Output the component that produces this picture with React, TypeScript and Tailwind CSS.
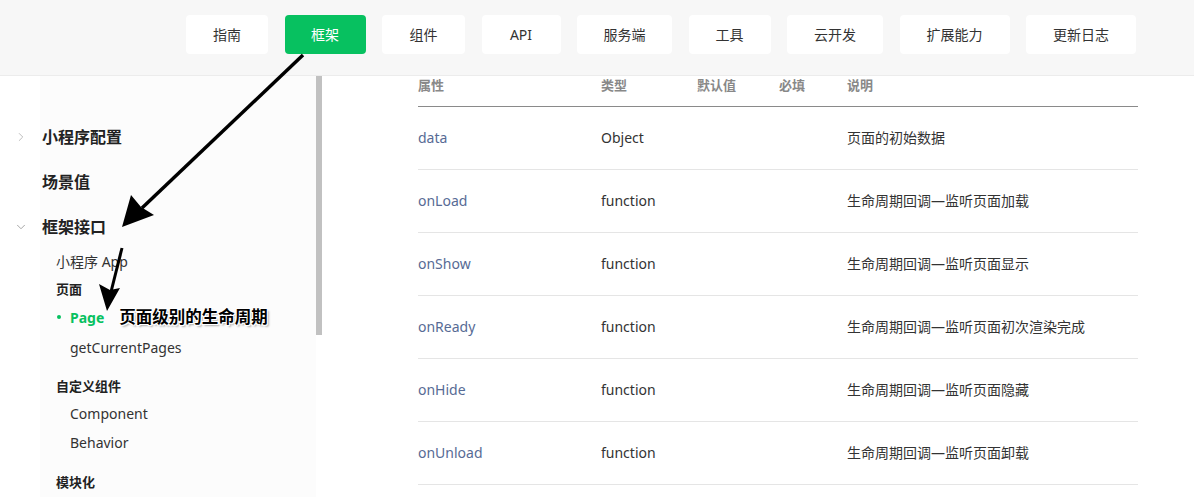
import React from 'react'
import { ChevronRight, ChevronDown } from 'lucide-react'

const navItems = [
	{ label: '指南', w: 'w-[82px]' },
	{ label: '框架', w: 'w-[81px]', active: true },
	{ label: '组件', w: 'w-[83px]' },
	{ label: 'API', w: 'w-[79px]' },
	{ label: '服务端', w: 'w-[95px]' },
	{ label: '工具', w: 'w-[82px]' },
	{ label: '云开发', w: 'w-[96px]' },
	{ label: '扩展能力', w: 'w-[110px]' },
	{ label: '更新日志', w: 'w-[110px]' },
]

const rows = [
	{ name: 'data', type: 'Object', desc: '页面的初始数据' },
	{ name: 'onLoad', type: 'function', desc: '生命周期回调—监听页面加载' },
	{ name: 'onShow', type: 'function', desc: '生命周期回调—监听页面显示' },
	{ name: 'onReady', type: 'function', desc: '生命周期回调—监听页面初次渲染完成' },
	{ name: 'onHide', type: 'function', desc: '生命周期回调—监听页面隐藏' },
	{ name: 'onUnload', type: 'function', desc: '生命周期回调—监听页面卸载' },
]

const cols = 'grid grid-cols-[183px_96px_82px_68px_291px]'

const App: React.FC = () => {
	return (
		<div className="relative w-[1194px] h-[497px] overflow-hidden bg-white text-[#333] font-['Noto_Sans','Noto_Sans_CJK_SC',sans-serif]">
			{/* Top nav */}
			<div className="h-[76px] bg-[#f7f7f7] border-b border-[#ececec] flex pl-[186px] pt-[15px] gap-[16.5px]">
				{navItems.map(item => (
					<div
						key={item.label}
						className={`${item.w} h-[39px] rounded flex items-center justify-center text-[14px] ${item.active ? 'bg-[#07c160] text-white' : 'bg-white text-[#333]'}`}
					>
						{item.label}
					</div>
				))}
			</div>

			<div className="flex">
				{/* Sidebar */}
				<div className="w-[316px] h-[421px] bg-[linear-gradient(to_right,#ffffff_40px,#fcfcfc_40px)] pt-[38px]">
					<div className="h-[45px] flex items-center">
						<div className="w-[42px] flex justify-center pr-[1px]">
							<ChevronRight size={14} strokeWidth={1.5} color="#b5b5b5" />
						</div>
						<span className="text-[16px] font-bold text-[#222]">小程序配置</span>
					</div>
					<div className="h-[45px] flex items-center pl-[42px]">
						<span className="text-[16px] font-bold text-[#222]">场景值</span>
					</div>
					<div className="h-[45px] flex items-center">
						<div className="w-[42px] flex justify-center pr-[1px]">
							<ChevronDown size={14} strokeWidth={1.5} color="#999" />
						</div>
						<span className="text-[16px] font-bold text-[#222]">框架接口</span>
					</div>
					<div className="h-[24px] flex items-center pl-[56px] text-[14px] text-[#333]">小程序 App</div>
					<div className="h-[24px] mt-[5px] flex items-center pl-[56px] text-[13px] font-bold text-[#222]">页面</div>
					<div className="h-[30px] flex items-center pl-[56px]">
						<span className="w-[14px] flex pl-[1px]">
							<span className="w-[4px] h-[4px] rounded-full bg-[#07c160]" />
						</span>
						<span className="text-[14px] font-bold text-[#07c160]">Page</span>
						<span className="ml-[15px] text-[16.5px] font-bold text-black [text-shadow:1px_1px_0_#fff,-1px_-1px_0_#fff,1px_-1px_0_#fff,-1px_1px_0_#fff,2px_2px_2px_#aaa]">
							页面级别的生命周期
						</span>
					</div>
					<div className="h-[30px] flex items-center pl-[70px] text-[14px] text-[#333]">getCurrentPages</div>
					<div className="h-[24px] mt-[13px] flex items-center pl-[56px] text-[13px] font-bold text-[#222]">自定义组件</div>
					<div className="h-[28px] flex items-center pl-[70px] text-[14px] text-[#333]">Component</div>
					<div className="h-[30px] flex items-center pl-[70px] text-[14px] text-[#333]">Behavior</div>
					<div className="h-[24px] mt-[14px] flex items-center pl-[56px] text-[13px] font-bold text-[#222]">模块化</div>
				</div>

				{/* Scrollbar */}
				<div className="w-[6px]">
					<div className="h-[259px] bg-[#c1c1c1]" />
				</div>

				{/* Content */}
				<div className="flex-1 pl-[96px]">
					<div className="w-[720px]">
						<div className={`${cols} h-[31px] border-b border-[#8a8a8a] text-[13px] font-bold text-[#888] leading-[18px]`}>
							<div>属性</div>
							<div>类型</div>
							<div>默认值</div>
							<div>必填</div>
							<div>说明</div>
						</div>
						{rows.map(r => (
							<div key={r.name} className={`${cols} h-[63px] pb-[2px] items-center border-b border-[#e5e5e5] text-[14px]`}>
								<div className="text-[#576b95]">{r.name}</div>
								<div className="text-[#333]">{r.type}</div>
								<div />
								<div />
								<div className="text-[#333]">{r.desc}</div>
							</div>
						))}
					</div>
				</div>
			</div>

			{/* Annotation arrows */}
			<svg className="absolute inset-0 pointer-events-none" width="1194" height="497" viewBox="0 0 1194 497">
				<line x1="303" y1="55" x2="142" y2="208" stroke="#000" strokeWidth="3.5" />
				<polygon points="122,227 131,195 141,207 154,215" fill="#000" />
				<line x1="122" y1="248" x2="111" y2="292" stroke="#000" strokeWidth="3" />
				<polygon points="107,311 99,284 110,290 120,288" fill="#000" />
			</svg>
		</div>
	)
}

export default App
